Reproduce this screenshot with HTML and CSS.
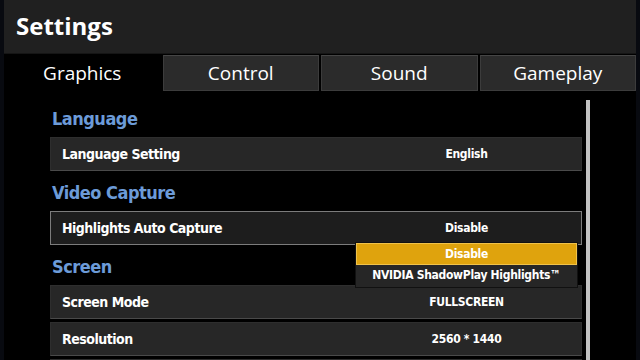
FILE: index.html
```html
<!DOCTYPE html>
<html lang="en">
<head>
    <meta charset="UTF-8">
    <meta name="viewport" content="width=device-width, initial-scale=1.0">
    <title>Settings</title>
    <link rel="stylesheet" href="styles.css">
</head>
<body>

    <div class="window">
        <div class="titlebar">Settings</div>

        <div class="tabs">
            <div class="tab active">Graphics</div>
            <div class="tab">Control</div>
            <div class="tab">Sound</div>
            <div class="tab">Gameplay</div>
        </div>

        <div class="content">
            <div class="list">
                <div class="section-title">Language</div>
                <div class="row">
                    <div class="label">Language Setting</div>
                    <div class="value">English</div>
                </div>

                <div class="section-title">Video Capture</div>
                <div class="row focused">
                    <div class="label">Highlights Auto Capture</div>
                    <div class="value">Disable</div>
                    <ul class="dropdown">
                        <li class="selected">Disable</li>
                        <li>NVIDIA ShadowPlay Highlights™</li>
                    </ul>
                </div>

                <div class="section-title">Screen</div>
                <div class="row">
                    <div class="label">Screen Mode</div>
                    <div class="value">FULLSCREEN</div>
                </div>
                <div class="row">
                    <div class="label">Resolution</div>
                    <div class="value">2560 * 1440</div>
                </div>
                <div class="row"></div>
            </div>
            <div class="scrollbar"></div>
        </div>
    </div>

</body>
</html>
```

FILE: styles.css
```css
body {
    margin: 0;
    background: #080a10;
    height: 360px;
    overflow: hidden;
    font-family: "Open Sans", "DejaVu Sans", sans-serif;
    color: #fff;
}

.window {
    width: 632px;
    height: 360px;
    margin-left: 4px;
    background: #000;
    overflow: hidden;
}

.titlebar {
    height: 54px;
    background: #202020;
    border-bottom: 1px solid #151515;
    padding-left: 12px;
    font-size: 24px;
    font-weight: 700;
    line-height: 52px;
    box-sizing: border-box;
}

.tabs {
    display: flex;
    gap: 2px;
    height: 36px;
    margin-top: 1px;
}

.tab {
    flex: 1;
    background: #2b2b2b;
    border: 1px solid #3c3c3c;
    border-top-color: #454545;
    text-align: center;
    font-size: 19px;
    line-height: 34px;
}

.tab.active {
    background: #000;
    border-color: #000;
}

.content {
    display: flex;
}

.list {
    width: 532px;
    padding: 9px 0 0 46px;
    font-family: "Liberation Sans Narrow", "DejaVu Sans Condensed", sans-serif;
}

.section-title {
    height: 37px;
    line-height: 37px;
    padding-left: 2px;
    color: #6c9bd8;
    font-size: 18px;
    font-weight: 700;
    letter-spacing: -0.5px;
}

.row {
    position: relative;
    display: flex;
    height: 34px;
    margin-bottom: 3px;
    background: #272727;
    border: 1px solid #2e2e2e;
    border-bottom-color: #4a4a4a;
    box-sizing: border-box;
    align-items: center;
    font-weight: 700;
}

.row.focused {
    background: #1d1d1d;
    border-color: #7c7c7c;
}

.label {
    width: 290px;
    padding-left: 11px;
    font-size: 14px;
    letter-spacing: -0.5px;
}

.value {
    flex: 1;
    text-align: center;
    font-size: 12px;
    letter-spacing: -0.3px;
}

.dropdown {
    position: absolute;
    top: 30px;
    left: 304px;
    width: 221px;
    margin: 0;
    padding: 0;
    list-style: none;
    background: #262626;
    border: 1px solid #111;
    text-align: center;
    font-size: 12px;
    letter-spacing: -0.3px;
    z-index: 2;
}

.dropdown li {
    height: 22px;
    line-height: 21px;
}

.dropdown li.selected {
    background: #dfa30d;
    border: 1px solid #f0c24a;
    height: 20px;
    line-height: 20px;
}

.scrollbar {
    width: 4px;
    height: 260px;
    margin: 9px 0 0 4px;
    background: #c2c2c2;
}
```
